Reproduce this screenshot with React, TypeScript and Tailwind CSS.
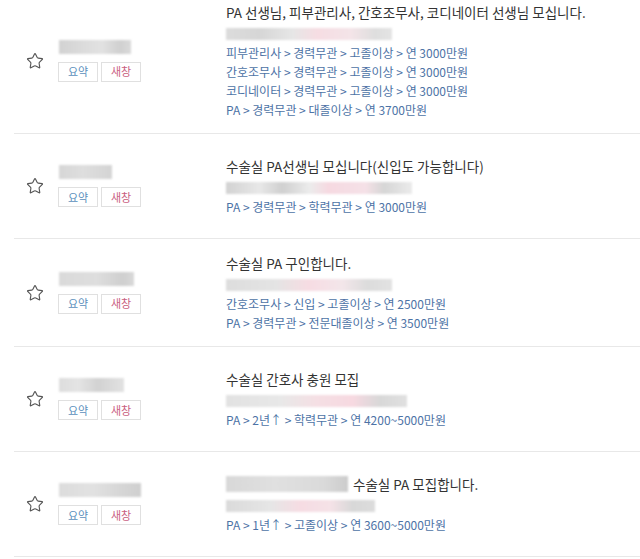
import React from 'react';
import { Star } from 'lucide-react';

interface JobRow {
  nameBlur: string;
  titleBlur?: string;
  title: string;
  infoBlur: string;
  subs: string[];
}

const rows: JobRow[] = [
  {
    nameBlur: 'w-[72px] bg-[linear-gradient(90deg,#d2d2d2_0%,#dcdcdc_35%,#e2e2e2_60%,#d0d0d0_85%,#dadada_100%)]',
    title: 'PA 선생님, 피부관리사, 간호조무사, 코디네이터 선생님 모십니다.',
    infoBlur: 'w-[166px] bg-[linear-gradient(90deg,#dcdcdc_0%,#d6d6d6_20%,#e6e6e6_40%,#f6dde3_55%,#f4e4e8_75%,#dedede_90%,#e4e4e4_100%)]',
    subs: [
      '피부관리사 > 경력무관 > 고졸이상 > 연 3000만원',
      '간호조무사 > 경력무관 > 고졸이상 > 연 3000만원',
      '코디네이터 > 경력무관 > 고졸이상 > 연 3000만원',
      'PA > 경력무관 > 대졸이상 > 연 3700만원',
    ],
  },
  {
    nameBlur: 'w-[53px] bg-[linear-gradient(90deg,#d6d6d6_0%,#dedede_45%,#d4d4d4_100%)]',
    title: '수술실 PA선생님 모십니다(신입도 가능합니다)',
    infoBlur: 'w-[186px] h-[9px] bg-[linear-gradient(90deg,#d2d2d2_0%,#e8e8e8_18%,#d0d0d0_30%,#ececec_45%,#f6d9e1_55%,#f5e1e7_75%,#d6d6d6_85%,#ebebeb_100%)]',
    subs: ['PA > 경력무관 > 학력무관 > 연 3000만원'],
  },
  {
    nameBlur: 'w-[75px] bg-[linear-gradient(90deg,#dadada_0%,#dedede_50%,#cfcfcf_85%,#d9d9d9_100%)]',
    title: '수술실 PA 구인합니다.',
    infoBlur: 'w-[166px] bg-[linear-gradient(90deg,#dddddd_0%,#e4e4e4_30%,#f7dce3_50%,#f3e6ea_70%,#dcdcdc_85%,#e2e2e2_100%)]',
    subs: ['간호조무사 > 신입 > 고졸이상 > 연 2500만원', 'PA > 경력무관 > 전문대졸이상 > 연 3500만원'],
  },
  {
    nameBlur: 'w-[65px] bg-[linear-gradient(90deg,#dddddd_0%,#e4e4e4_30%,#d2d2d2_60%,#e2e2e2_100%)]',
    title: '수술실 간호사 충원 모집',
    infoBlur: 'w-[181px] bg-[linear-gradient(90deg,#e2e2e2_0%,#e8e8e8_30%,#f5dfe4_50%,#f7d9e1_70%,#d8d8d8_85%,#e0e0e0_100%)]',
    subs: ['PA > 2년↑ > 학력무관 > 연 4200~5000만원'],
  },
  {
    nameBlur: 'w-[82px] bg-[linear-gradient(90deg,#dcdcdc_0%,#e2e2e2_40%,#d6d6d6_75%,#cfcfcf_100%)]',
    titleBlur: 'w-[122px] bg-[linear-gradient(90deg,#d8d8d8_0%,#e0e0e0_40%,#dadada_80%,#cccccc_100%)]',
    title: '수술실 PA 모집합니다.',
    infoBlur: 'w-[149px] bg-[linear-gradient(90deg,#dadada_0%,#e6e6e6_30%,#f6dce3_50%,#f5e2e7_70%,#d8d8d8_85%,#dcdcdc_100%)]',
    subs: ['PA > 1년↑ > 고졸이상 > 연 3600~5000만원'],
  },
];

const Row = ({ row }: { row: JobRow }) => (
  <div className="flex items-center py-[14px] border-b border-[#e8e8e8]">
    <div className="pl-[12px] w-[44px] flex items-center">
      <Star size={18} strokeWidth={1.5} className="text-[#555]" />
    </div>
    <div className="w-[168px] flex flex-col">
      <div className={`h-[14px] ml-[1px] blur-[1px] ${row.nameBlur}`} />
      <div className="flex gap-[3px] mt-[8px]">
        <span className="w-[40px] h-[20px] border border-[#e0e0e0] flex items-center justify-center text-[11px] text-[#5b8fbc]">
          요약
        </span>
        <span className="w-[40px] h-[20px] border border-[#e0e0e0] flex items-center justify-center text-[11px] text-[#c9607f]">
          새창
        </span>
      </div>
    </div>
    <div className="flex-1 min-h-[76px] flex flex-col justify-center">
      <div className="flex items-center h-[20px] mb-[2px] text-[13.5px] text-[#333]">
        {row.titleBlur && <div className={`h-[16px] mr-[5px] blur-[1px] ${row.titleBlur}`} />}
        <span>{row.title}</span>
      </div>
      <div className="h-[19px] flex items-center">
        <div className={`h-[12px] blur-[1px] ${row.infoBlur}`} />
      </div>
      {row.subs.map((s) => (
        <div key={s} className="h-[19px] leading-[19px] text-[12px] text-[#4d73a6]">
          {s}
        </div>
      ))}
    </div>
  </div>
);

export default function App() {
  return (
    <div className="w-[640px] h-[559px] overflow-hidden bg-white font-['Noto_Sans_CJK_KR',sans-serif]">
      <div className="-mt-[12px] ml-[14px]">
        {rows.map((r, i) => (
          <Row key={i} row={r} />
        ))}
      </div>
    </div>
  );
}
